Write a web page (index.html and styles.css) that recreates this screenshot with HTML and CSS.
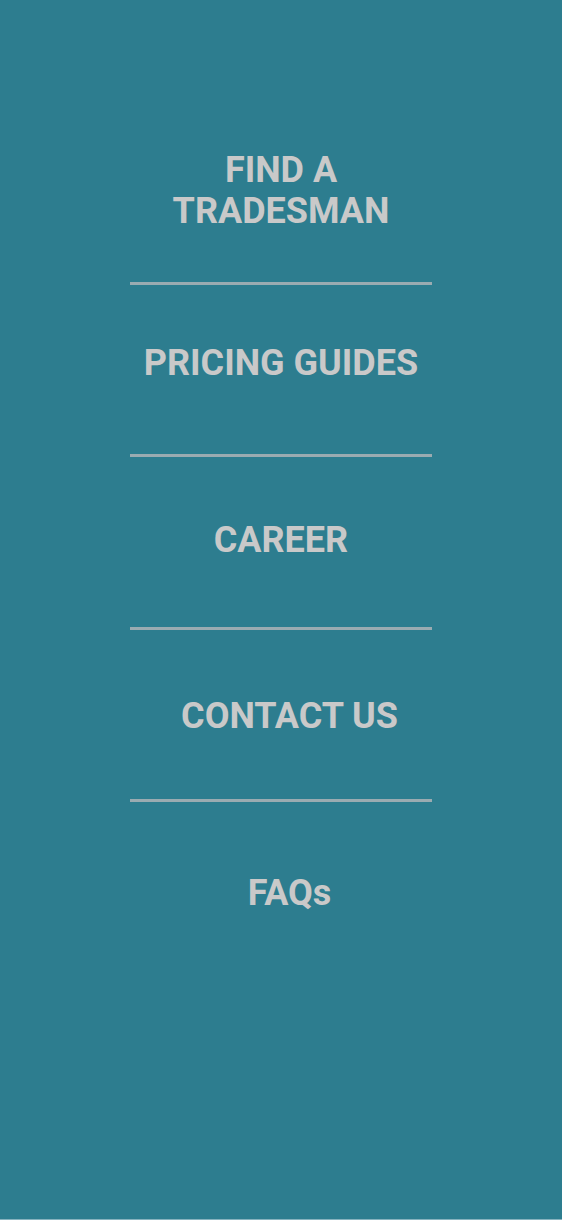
FILE: index.html
```html
<!DOCTYPE html>
<html>

<head>
  <meta charset="utf8">
  <title>Menu</title>
  <link rel="stylesheet" href="styles.css">
</head>

<body>
  <div class="pantalla">
    <ul class="menu">
      <li class="menu-item item-1"><a href="#">FIND A<br>TRADESMAN</a></li>
      <li class="menu-item item-2"><a href="#">PRICING GUIDES</a></li>
      <li class="menu-item item-3"><a href="#">CAREER</a></li>
      <li class="menu-item item-4 desplazado"><a href="#">CONTACT US</a></li>
      <li class="menu-item item-5 desplazado"><a href="#">FAQs</a></li>
    </ul>
  </div>
</body>

</html>
```

FILE: styles.css
```css
/* Estilos generales */
body {
  margin: 0;
  background-color: #86b3bf;
  font-family: Roboto, "Liberation Sans", Arial, sans-serif;
}

/* Fondo del menu */
.pantalla {
  height: 1219px;
  background-color: #2d7d8f;
}

/* Lista del menu */
.menu {
  list-style-type: none;
  margin: 0 auto;
  padding: 150px 0 0;
  width: 302px;
}

/* Cada opcion del menu */
.menu-item {
  text-align: center;
  border-bottom: 3px solid #9aabb1;
}

.menu-item a {
  display: block;
  color: #c9c9c9;
  font-size: 36px;
  font-weight: 700;
  line-height: 41px;
  text-decoration: none;
}

/* Espaciado de cada opcion */
.item-1 {
  padding: 0 0 50px;
}

.item-2 {
  padding: 58px 0 70px;
}

.item-3 {
  padding: 63px 0 66px;
}

.item-4 {
  padding: 66px 0 62px;
}

.item-5 {
  padding: 71px 0 0;
  border-bottom: none;
}

/* Las dos ultimas opciones van un poco a la derecha */
.desplazado a {
  padding-left: 17px;
}
```
